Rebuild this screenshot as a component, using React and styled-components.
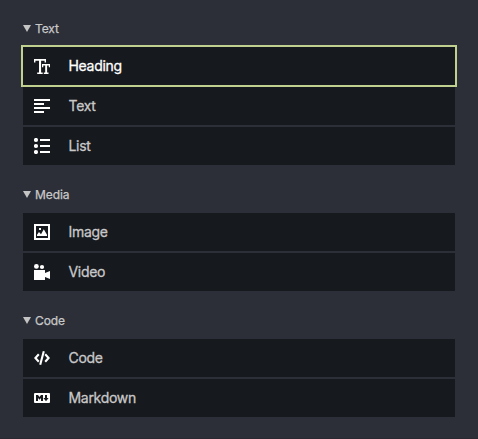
import React from "react";
import styled, { createGlobalStyle } from "styled-components";

const GlobalStyle = createGlobalStyle`
  * { box-sizing: border-box; }
  body {
    margin: 0;
    background: #2c2f38;
    font-family: Inter, "Liberation Sans", sans-serif;
    -webkit-font-smoothing: antialiased;
  }
`;

const Panel = styled.main`
  display: flex;
  flex-direction: column;
  gap: 20px;
  height: 439px;
  padding: 19px 23px 0;
  background: #2c2f38;
  border-bottom: 1px solid #2b2831;
`;

const Section = styled.section`
  display: flex;
  flex-direction: column;
`;

const SectionHeader = styled.h2`
  display: flex;
  align-items: center;
  gap: 4px;
  height: 20px;
  margin: 0 0 8px;
  color: #c8c8c9;
  font-size: 12px;
  font-weight: 400;
  line-height: 20px;
  letter-spacing: -0.1px;
  -webkit-text-stroke: 0.25px currentColor;
`;

const Triangle = styled.svg`
  width: 8px;
  height: 7px;
  margin-bottom: 2px;
  flex: none;
  fill: #c4c4c4;
`;

const BlockList = styled.div`
  display: flex;
  flex-direction: column;
  gap: 2px;
  width: 432px;
`;

const BlockButton = styled.button`
  display: flex;
  align-items: center;
  gap: 18.5px;
  height: 38px;
  padding: 0 11px;
  border: 0;
  background: #16191d;
  color: ${(p) => (p.$active ? "#ffffff" : "#c8c8c9")};
  font: 400 14px/20px Inter, "Liberation Sans", sans-serif;
  letter-spacing: -0.3px;
  -webkit-text-stroke: 0.3px currentColor;
  text-align: left;
  outline: ${(p) => (p.$active ? "2px solid #c0d08f" : "none")};
`;

const Glyph = styled.svg`
  width: 16px;
  height: 16px;
  flex: none;
  fill: #ffffff;
`;

const icons = {
  heading: (
    <path d="M0 1h12v3.6h-1.4V2.8H7.1V14.4h1.6V16H3.2v-1.6H5V2.8H1.4v1.8H0zM8 6h8v3.2h-1.2V7.6h-1.7v6.9h1.4V16H9.8v-1.5h1.4V7.6H9.3v1.6H8z" />
  ),
  text: <path d="M0 1h16v2H0zM0 5h10v2H0zM0 9h16v2H0zM0 13h10v2H0z" />,
  list: (
    <>
      <circle cx="2" cy="2" r="2.1" />
      <circle cx="2" cy="8" r="2.1" />
      <circle cx="2" cy="14" r="2.1" />
      <path d="M6 1h10v2H6zM6 7h10v2H6zM6 13h10v2H6z" />
    </>
  ),
  image: (
    <>
      <path fillRule="evenodd" d="M0 0h16v16H0zM2 2v12h12V2z" />
      <path d="M3 12v-1.2L5 8l2 2.2L9.8 5.2l3.2 5.6V12z" />
      <rect x="5" y="4" width="2" height="2" />
    </>
  ),
  video: (
    <>
      <circle cx="2.4" cy="2.4" r="2.4" />
      <circle cx="8" cy="3" r="2.1" />
      <path d="M0 6h11v3l5-2v8l-5-2v3H0z" />
    </>
  ),
  code: (
    <g fill="none" stroke="#fff" strokeWidth="2.1">
      <path d="M4.8 4.2L1.4 8l3.4 3.8M11.2 4.2L14.6 8l-3.4 3.8M9.8 1.2L6.2 14.8" />
    </g>
  ),
  markdown: (
    <>
      <rect y="3" width="16" height="10" rx="1" />
      <path
        fill="#16191d"
        d="M2 11V5h2l1.5 2L7 5h2v6H7V8L5.5 9.8 4 8v3zM11 5h2v3h1.6L12 11.2 9.4 8H11z"
      />
    </>
  ),
};

const sections = [
  {
    title: "Text",
    blocks: [
      { label: "Heading", icon: "heading", active: true },
      { label: "Text", icon: "text" },
      { label: "List", icon: "list" },
    ],
  },
  {
    title: "Media",
    blocks: [
      { label: "Image", icon: "image" },
      { label: "Video", icon: "video" },
    ],
  },
  {
    title: "Code",
    blocks: [
      { label: "Code", icon: "code" },
      { label: "Markdown", icon: "markdown" },
    ],
  },
];

export default function App() {
  return (
    <>
      <GlobalStyle />
      <Panel>
        {sections.map((section) => (
          <Section key={section.title}>
            <SectionHeader>
              <Triangle viewBox="0 0 8 7" aria-hidden="true">
                <path d="M0 0h8L4 7z" />
              </Triangle>
              {section.title}
            </SectionHeader>
            <BlockList>
              {section.blocks.map((block) => (
                <BlockButton key={block.label} type="button" $active={block.active}>
                  <Glyph viewBox="0 0 16 16" aria-hidden="true">
                    {icons[block.icon]}
                  </Glyph>
                  {block.label}
                </BlockButton>
              ))}
            </BlockList>
          </Section>
        ))}
      </Panel>
    </>
  );
}
